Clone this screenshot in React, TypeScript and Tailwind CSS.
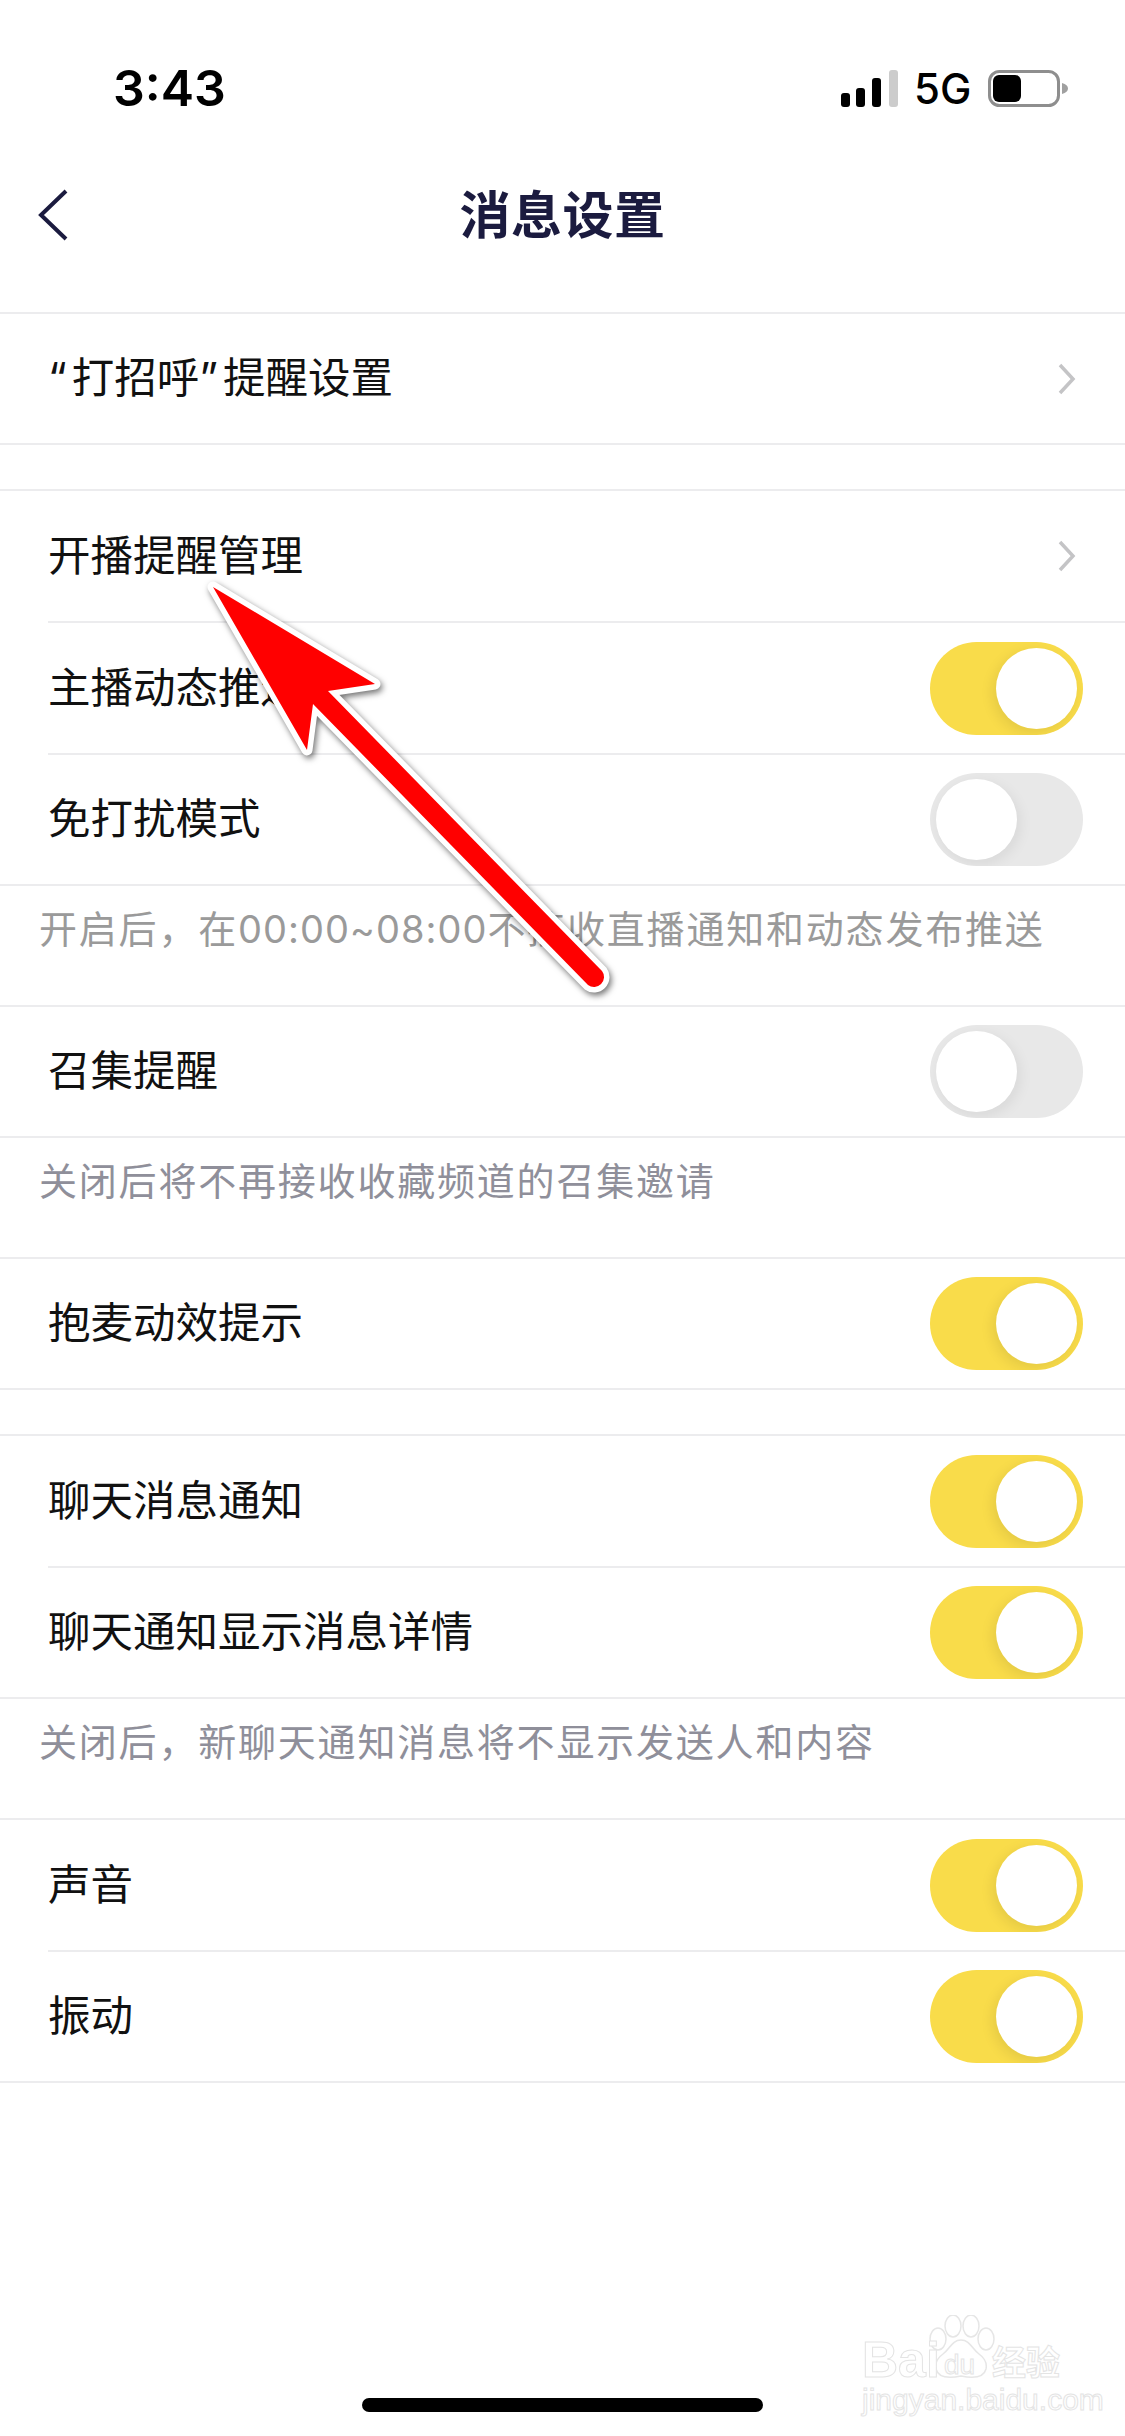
import React from 'react';

const FONT = 'font-["Inter","Noto_Sans_CJK_SC",sans-serif]';

const Toggle = ({ on }: { on?: boolean }) => (
  <div className={`flex h-[93px] w-[153px] shrink-0 items-center overflow-hidden rounded-full px-[6px] ${on ? 'justify-end bg-[#f9dc4a]' : 'justify-start bg-[#e8e8e8]'}`}>
    <div className={`h-[81px] w-[81px] rounded-full bg-white ${on ? 'shadow-[-3px_4px_14px_rgba(0,0,0,0.09)]' : 'shadow-[3px_4px_14px_rgba(0,0,0,0.07)]'}`} />
  </div>
);

const Chevron = () => (
  <svg width="18" height="32" viewBox="0 0 18 32" fill="none" stroke="#c4c4c6" strokeWidth="3.5" className="mr-[7px]">
    <path d="M2 2l13 14L2 30" />
  </svg>
);

const Row = ({ label, on, link, last }: { label: React.ReactNode; on?: boolean; link?: boolean; last?: boolean }) => (
  <div className={`ml-[48px] flex items-center justify-between pr-[42px] ${last ? 'h-[129px]' : 'h-[132px] border-b-2 border-[#ececee]'}`}>
    <span className="text-[42.5px] leading-none text-[#111]">{label}</span>
    {link ? <Chevron /> : <Toggle on={on} />}
  </div>
);

const Group = ({ children, className = '' }: { children: React.ReactNode; className?: string }) => (
  <div className={`border-y-2 border-[#ececee] ${className}`}>{children}</div>
);

const Note = ({ children, neutral }: { children: React.ReactNode; neutral?: boolean }) => (
  <div className={`h-[119px] pl-[39px] pt-[13px] text-[38px] leading-[60px] tracking-[1.8px] ${neutral ? 'text-[#9a9a9a]' : 'text-[#8f8f9a]'}`}>{children}</div>
);

const StatusBar = () => (
  <div className="flex h-[140px] items-start justify-between pl-[113px] pr-[56px] pt-[70px]">
    <span className="font-['Inter'] text-[50px] font-semibold leading-[37px] text-black">3:43</span>
    <div className="flex items-center">
      <svg width="57" height="37" viewBox="0 0 57 37">
        <rect x="0" y="23" width="9" height="14" rx="3" fill="#000" />
        <rect x="15" y="18" width="9" height="19" rx="3" fill="#000" />
        <rect x="31" y="8" width="9" height="29" rx="3" fill="#000" />
        <rect x="48" y="0" width="9" height="37" rx="3" fill="#ccc" />
      </svg>
      <span className="ml-[16px] w-[57px] font-['Inter'] text-[42px] font-medium leading-[37px] text-black">5G</span>
      <svg width="81" height="37" viewBox="0 0 81 37" className="ml-[17px]">
        <rect x="1.5" y="1.5" width="69" height="34" rx="10" fill="#fff" stroke="#8e8e8e" strokeWidth="3" />
        <rect x="5" y="5" width="28" height="27" rx="6" fill="#000" />
        <path d="M74 13c4 1 6 3 6 5.500s-2 4.500-6 5.500z" fill="#a0a0a0" />
      </svg>
    </div>
  </div>
);

const NavBar = () => (
  <div className="grid h-[172px] grid-cols-[1fr_auto_1fr] items-center pb-[22px]">
    <svg width="30" height="52" viewBox="0 0 30 52" fill="none" stroke="#1b1b3f" strokeWidth="4" className="ml-[38px]">
      <path d="M28 2L3 26l25 24" />
    </svg>
    <span className="text-[51px] font-bold leading-none tracking-[0.5px] text-[#1b1b3f]">消息设置</span>
    <div />
  </div>
);

const Arrow = () => (
  <svg width="1125" height="2436" viewBox="0 0 1125 2436" className="pointer-events-none absolute left-0 top-0">
    <path
      d="M213 587L375 684L328 691L602 971A10 10 0 0 1 588 985L313 704L307 750Z"
      fill="#ff0000"
      stroke="#fff"
      strokeWidth="11"
      strokeLinejoin="round"
      paintOrder="stroke"
      className="drop-shadow-[2px_3px_3px_rgba(0,0,0,0.55)]"
    />
  </svg>
);

const Watermark = () => (
  <div className="pointer-events-none absolute left-[860px] top-[2315px] h-[100px] w-[210px] text-white [-webkit-text-stroke:1px_#e4e4e4]">
    <svg width="70" height="66" viewBox="0 0 70 66" fill="#fff" stroke="#e6e6e6" strokeWidth="1.500" className="absolute left-[66px] top-0">
      <ellipse cx="12" cy="24" rx="8" ry="11" />
      <ellipse cx="27" cy="11" rx="8" ry="11" />
      <ellipse cx="45" cy="11" rx="8" ry="11" />
      <ellipse cx="60" cy="24" rx="8" ry="11" />
      <path d="M35 25c-9 0-11 9-18 14-7 5-8 10-7 15 2 8 10 10 25 7 15 3 23 1 25-7 1-5 0-10-7-15-7-5-9-14-18-14z" />
    </svg>
    <span className="absolute left-[2px] top-[20px] font-['Liberation_Sans'] text-[50px] font-bold leading-[50px]">Bai</span>
    <span className="absolute left-[84px] top-[35px] font-['Liberation_Sans'] text-[28px] leading-[30px]">du</span>
    <span className="absolute left-[132px] top-[28px] text-[34px] font-bold leading-[40px]">经验</span>
    <span className="absolute left-[2px] top-[69px] font-['Liberation_Sans'] text-[30px] leading-[32px]">jingyan.baidu.com</span>
  </div>
);

const App: React.FC = () => {
  return (
    <div className={`relative h-[2436px] w-[1125px] overflow-hidden bg-white ${FONT}`}>
      <StatusBar />
      <NavBar />

      <Group>
        <Row
          label={
            <>
              <span className="tracking-[5px]">“</span>打招呼<span className="tracking-[5px]">”</span>提醒设置
            </>
          }
          link
          last
        />
      </Group>

      <Group className="mt-[44px]">
        <Row label="开播提醒管理" link />
        <Row label="主播动态推送" on />
        <Row label="免打扰模式" last />
      </Group>
      <Note neutral>
        开启后，在<span className="tracking-[1px]">00:00~08:00</span>不接收直播通知和动态发布推送
      </Note>

      <Group>
        <Row label="召集提醒" last />
      </Group>
      <Note>关闭后将不再接收收藏频道的召集邀请</Note>

      <Group>
        <Row label="抱麦动效提示" on last />
      </Group>

      <Group className="mt-[44px]">
        <Row label="聊天消息通知" on />
        <Row label="聊天通知显示消息详情" on last />
      </Group>
      <Note>关闭后，新聊天通知消息将不显示发送人和内容</Note>

      <Group>
        <Row label="声音" on />
        <Row label="振动" on last />
      </Group>

      <Arrow />
      <Watermark />
      <div className="absolute bottom-[24px] left-[362px] h-[14px] w-[401px] rounded-full bg-black" />
    </div>
  );
};

export default App;
